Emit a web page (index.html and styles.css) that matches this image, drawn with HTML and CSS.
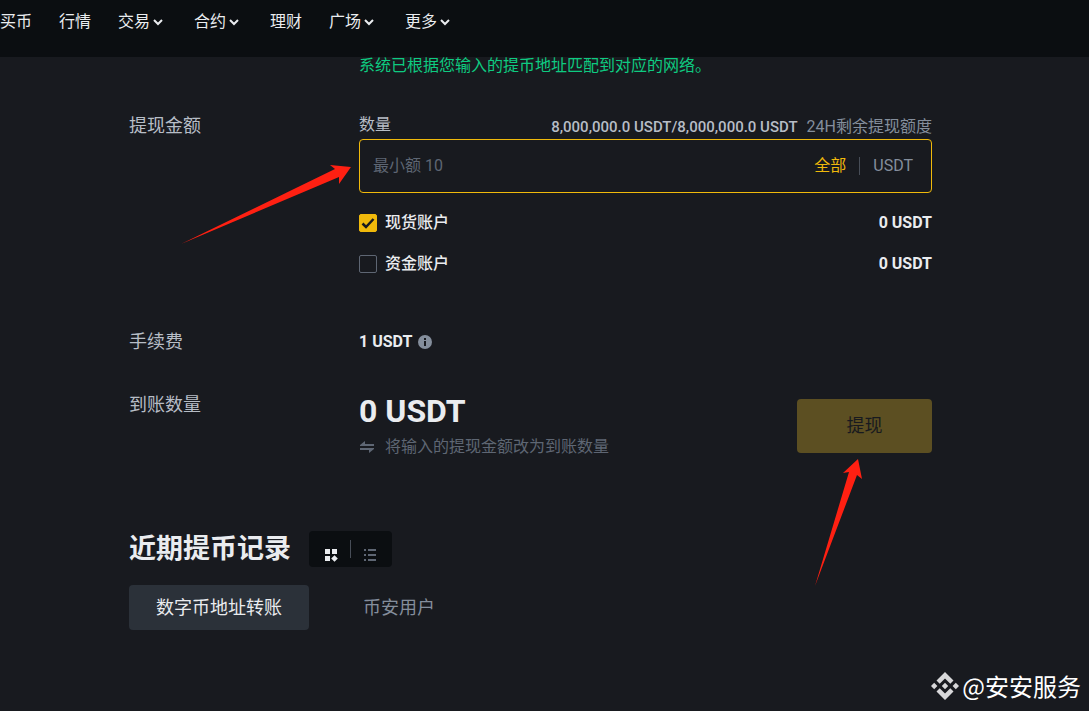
FILE: index.html
```html
<!DOCTYPE html>
<html lang="zh-CN">
<head>
  <meta charset="UTF-8" />
  <meta name="viewport" content="width=device-width, initial-scale=1.0"/>
  <title>提现</title>
  <link rel="stylesheet" href="styles.css">
</head>
<body>

  <header class="header">
    <nav class="nav">
      <a href="#">快捷买币</a>
      <a href="#">行情</a>
      <a href="#">交易<svg class="chevron" viewBox="0 0 16 16"><path d="M4 6l4 4 4-4"/></svg></a>
      <a href="#">合约<svg class="chevron" viewBox="0 0 16 16"><path d="M4 6l4 4 4-4"/></svg></a>
      <a href="#">理财</a>
      <a href="#">广场<svg class="chevron" viewBox="0 0 16 16"><path d="M4 6l4 4 4-4"/></svg></a>
      <a href="#">更多<svg class="chevron" viewBox="0 0 16 16"><path d="M4 6l4 4 4-4"/></svg></a>
    </nav>
  </header>

  <main class="main">
    <form>
      <p class="notice">系统已根据您输入的提币地址匹配到对应的网络。</p>

      <div class="row row-amount">
        <div class="row-label">提现金额</div>
        <div class="row-body">
          <div class="amount-head">
            <label for="amount">数量</label>
            <span class="quota"><b>8,000,000.0 USDT/8,000,000.0 USDT</b><span>24H剩余提现额度</span></span>
          </div>
          <div class="amount-box">
            <input type="text" id="amount" placeholder="最小额 10"/>
            <button type="button" class="all">全部</button>
            <span class="unit">USDT</span>
          </div>
          <div class="account">
            <label><input type="checkbox" checked/>现货账户</label>
            <span>0 USDT</span>
          </div>
          <div class="account">
            <label><input type="checkbox"/>资金账户</label>
            <span>0 USDT</span>
          </div>
        </div>
      </div>

      <div class="row row-fee">
        <div class="row-label">手续费</div>
        <div class="row-body fee">
          <span>1 USDT</span>
          <svg class="info" viewBox="0 0 14 14"><circle cx="7" cy="7" r="7" fill="#848e9c"/><path d="M6 3h2v2H6zM6 6h2v5H6z" fill="#181a1f"/></svg>
        </div>
      </div>

      <div class="row">
        <div class="row-label">到账数量</div>
        <div class="row-body receive">
          <div>
            <div class="total">0 USDT</div>
            <button type="button" class="convert">
              <svg viewBox="0 0 14 12"><path d="M0 5V4L5 0v3h9v2zM14 7v1L9 12V9H0V7z"/></svg>将输入的提现金额改为到账数量
            </button>
          </div>
          <button type="submit" class="submit" disabled>提现</button>
        </div>
      </div>
    </form>

    <section class="history">
      <div class="history-head">
        <h2>近期提币记录</h2>
        <div class="view-switch">
          <button type="button" aria-label="卡片">
            <svg width="13" height="13" viewBox="0 0 13 13" fill="#eaecef"><path d="M0 0h5v5H0zM7 0h5v5H7zM0 7h5v5H0zM9.500 6.200l3.300 3.300-3.300 3.300-3.300-3.300z"/></svg>
          </button>
          <span class="divider"></span>
          <button type="button" aria-label="列表">
            <svg width="13" height="13" viewBox="0 0 13 13" fill="#5e6673"><path d="M0 0h2v2H0zM4 0h8v2H4zM0 5h2v2H0zM4 5h8v2H4zM0 10h2v2H0zM4 10h8v2H4z"/></svg>
          </button>
        </div>
      </div>
      <div class="tabs">
        <button type="button" class="tab active">数字币地址转账</button>
        <button type="button" class="tab">币安用户</button>
      </div>
    </section>
  </main>

  <!-- hint arrows -->
  <svg class="arrow arrow-amount" viewBox="0 0 170 80"><path d="M0 79L154 4 149 0l21 2-12 17v-7z"/></svg>
  <svg class="arrow arrow-submit" viewBox="0 0 48 128"><path d="M0 127L34 13l-6 1L43 0l4 20-5-4z"/></svg>

  <div class="watermark">
    <svg viewBox="0 0 28 28"><path d="M14 0l8.500 8.500-3.200 3.200L14 6.400l-5.300 5.300-3.200-3.200zM14 28l8.500-8.500-3.200-3.200-5.300 5.300-5.300-5.300-3.200 3.200zM3.200 10.800L6.400 14l-3.200 3.200L0 14zM24.800 10.800L28 14l-3.200 3.200-3.200-3.200zM14 10.800l3.200 3.200-3.200 3.200-3.200-3.200z"/></svg>
    <span>@安安服务</span>
  </div>

</body>
</html>
```
FILE: styles.css
```css
* {
  box-sizing: border-box;
}

body {
  position: relative;
  min-height: 100vh;
  margin: 0;
  overflow-x: hidden;
  background: #181a1f;
  color: #eaecef;
  font-family: Roboto, "Noto Sans CJK SC", sans-serif;
  font-size: 16px;
  line-height: 24px;
}

button, input {
  margin: 0;
  padding: 0;
  border: none;
  background: none;
  color: inherit;
  font: inherit;
}

button {
  cursor: pointer;
}

.header {
  height: 57px;
  padding-top: 10px;
  background: #0b0e11;
}

/* first link runs off the left edge */
.nav {
  display: flex;
  gap: 27px;
  margin-left: -32px;
}

.nav a {
  display: flex;
  align-items: center;
  color: #eaecef;
  text-decoration: none;
  white-space: nowrap;
}

.chevron {
  width: 16px;
  height: 16px;
  margin-right: 1px;
  fill: none;
  stroke: #eaecef;
  stroke-width: 2;
}

.main {
  padding: 0 157px 0 129px;
}

.notice {
  margin: 0 0 38px 230px;
  line-height: 18px;
  color: #0ecb81;
}

.row {
  display: flex;
}

.row-label {
  flex: 0 0 230px;
  font-size: 18px;
  line-height: 26px;
  color: #b7bdc6;
}

.row-body {
  flex: 1;
}

.row-amount {
  margin-bottom: 53px;
}

.amount-head {
  display: flex;
  justify-content: space-between;
  color: #b7bdc6;
}

.quota {
  padding-top: 2px;
  color: #848e9c;
}

.quota b {
  margin-right: 9px;
  font-size: 15px;
  font-weight: 500;
  color: #b7bdc6;
}

.amount-box {
  display: flex;
  align-items: center;
  height: 54px;
  padding: 0 18px 0 13px;
  border: 1px solid #f0b90b;
  border-radius: 4px;
}

.amount-box input {
  flex: 1;
  min-width: 0;
  outline: none;
}

.amount-box input::placeholder {
  color: #5e6673;
}

.all {
  color: #f0b90b;
}

.unit {
  margin-left: 13px;
  padding-left: 13px;
  border-left: 1px solid #474d57;
  line-height: 18px;
  color: #848e9c;
}

.account {
  display: flex;
  justify-content: space-between;
  margin-top: 17px;
  font-weight: 500;
}

.amount-box + .account {
  margin-top: 18px;
}

.account label {
  display: flex;
  align-items: center;
  gap: 8px;
}

.account span, .fee span {
  font-weight: 700;
}

.account input {
  appearance: none;
  width: 18px;
  height: 18px;
  border: 1px solid #5e6673;
  border-radius: 2px;
}

.account input:checked {
  border-color: #f0b90b;
  background: #f0b90b url("data:image/svg+xml,%3Csvg xmlns='http://www.w3.org/2000/svg' viewBox='0 0 16 16'%3E%3Cpath d='M2.500 8.500l3.500 3.500 7.500-8' fill='none' stroke='%23181a1f' stroke-width='2.500'/%3E%3C/svg%3E");
}

.row-fee {
  margin-bottom: 37px;
}

.fee {
  display: flex;
  align-items: center;
  gap: 6px;
}

.info {
  width: 14px;
  height: 14px;
}

.receive {
  display: flex;
  justify-content: space-between;
  align-items: center;
}

.total {
  font-size: 32px;
  font-weight: 700;
  line-height: 38px;
}

.convert {
  display: flex;
  align-items: center;
  gap: 10px;
  margin-top: 5px;
  color: #5e6673;
}

.convert svg {
  width: 16px;
  height: 12px;
  fill: #5e6673;
}

.submit {
  width: 135px;
  height: 54px;
  border-radius: 4px;
  background: #5c4f22;
  color: #181a1f;
  font-size: 18px;
}

.history {
  margin-top: 72px;
}

.history-head {
  display: flex;
  align-items: center;
  gap: 18px;
}

h2 {
  margin: 0;
  font-size: 27px;
  line-height: 36px;
}

.view-switch {
  display: flex;
  height: 36px;
  padding: 9px 3px 5px;
  border-radius: 4px;
  background: #0b0e11;
}

.view-switch button {
  display: flex;
  justify-content: center;
  align-items: flex-end;
  width: 38px;
}

.divider {
  width: 1px;
  height: 18px;
  background: #474d57;
}

.tabs {
  display: flex;
  gap: 27px;
  margin-top: 18px;
}

.tab {
  height: 45px;
  padding: 0 27px;
  border-radius: 4px;
  color: #848e9c;
  font-size: 18px;
}

.tab.active {
  background: #2b3139;
  color: #eaecef;
}

.arrow {
  position: absolute;
  fill: #ff2012;
  pointer-events: none;
}

.arrow-amount {
  top: 165px;
  left: 181px;
  width: 170px;
  height: 80px;
}

.arrow-submit {
  top: 459px;
  right: 226px;
  width: 48px;
  height: 128px;
}

.watermark {
  position: absolute;
  right: 8px;
  bottom: 7px;
  display: flex;
  align-items: center;
  gap: 3px;
  font-family: "Noto Sans CJK SC", sans-serif;
  font-size: 24px;
  line-height: 36px;
  color: #fff;
}

.watermark svg {
  width: 28px;
  height: 28px;
  fill: #d8d8da;
}
```
